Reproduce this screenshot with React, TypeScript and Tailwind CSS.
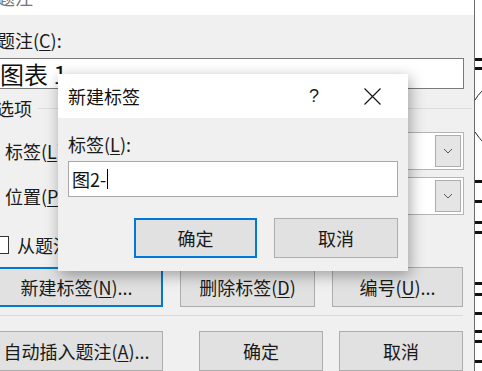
import React from 'react';

const font = { fontFamily: '"Noto Sans CJK SC", "Microsoft YaHei", sans-serif' };

const Btn = ({ children, w, primary, className = '' }: { children: React.ReactNode; w: string; primary?: boolean; className?: string }) => (
    <div
        className={`${w} h-[40px] shrink-0 flex items-center justify-center bg-[#e1e1e1] text-[18px] text-[#1a1a1a] ${primary ? 'border-2 border-[#0078d7]' : 'border border-[#adadad]'} ${className}`}
    >
        {children}
    </div>
);

const Combo = () => (
    <div className="ml-auto w-[384px] h-[38px] bg-white border border-[#b4b4b4] flex justify-end items-stretch p-[2px]">
        <div className="w-[26px] bg-[#e5e5e5] border border-[#adadad] flex items-center justify-center">
            <svg width="10" height="6" viewBox="0 0 10 6">
                <path d="M1 1 L5 5 L9 1" fill="none" stroke="#555" strokeWidth="1" />
            </svg>
        </div>
    </div>
);

// document strip on the far right
const DocStrip = () => {
    const bars = [58, 67, 180, 200, 221, 231, 282, 293, 312, 330, 340, 360];
    return (
        <div className="relative flex-1 bg-white border-l border-[#6b6b6b]">
            {bars.map(y => (
                <div key={y} className="absolute left-0 right-0 h-[3px] bg-[#111]" style={{ top: y }} />
            ))}
            <svg className="absolute left-0 top-0" width="8" height="371">
                <path d="M8 90 Q2 96 0 100" fill="none" stroke="#222" strokeWidth="1" />
                <path d="M0 132 Q4 138 8 142" fill="none" stroke="#222" strokeWidth="1" />
            </svg>
        </div>
    );
};

export default function App() {
    return (
        <div className="relative w-[482px] h-[371px] overflow-hidden flex" style={font}>
            {/* background caption dialog */}
            <div className="w-[474px] shrink-0 bg-[#f0f0f0] flex flex-col">
                <div className="h-[17px] bg-white overflow-hidden">
                    <div className="text-[18px] leading-[18px] text-[#777] -mt-[12px] -ml-[3px]">题注</div>
                </div>
                <div className="mt-[13px] h-[24px] leading-[24px] text-[18px] text-[#1a1a1a] -ml-[3px]">
                    题注(<u className="underline-offset-2">C</u>):
                </div>
                <div className="mt-[6px] ml-[-2px] w-[466px] h-[35px] bg-white border border-[#7a7a7a] flex items-center">
                    <span className="text-[24px] leading-[24px] text-[#111] pl-[1px] tracking-[0px]">图表 1</span>
                </div>
                <div className="mt-[7px] h-[24px] flex items-center">
                    <span className="text-[18px] text-[#1a1a1a] -ml-[4px]">选项</span>
                    <div className="ml-[6px] w-[434px] h-px bg-[#dcdcdc]" />
                </div>
                <div className="mt-[12px] flex items-center pr-[10px]">
                    <span className="ml-[5px] text-[18px] text-[#1a1a1a]">标签(<u className="underline-offset-2">L</u>)</span>
                    <Combo />
                </div>
                <div className="mt-[7px] flex items-center pr-[10px]">
                    <span className="ml-[5px] text-[18px] text-[#1a1a1a]">位置(<u className="underline-offset-2">P</u>)</span>
                    <Combo />
                </div>
                <div className="mt-[21px] h-[18px] flex items-center">
                    <div className="ml-[-8px] w-[17px] h-[18px] bg-white border border-[#333]" />
                    <span className="ml-[8px] text-[18px] text-[#1a1a1a]">从题注中排除标签(E)</span>
                </div>
                <div className="mt-[13px] flex gap-[17px] ml-[-10px]">
                    <Btn w="w-[173px]" primary>新建标签(<u className="underline-offset-2">N</u>)...</Btn>
                    <Btn w="w-[135px]">删除标签(<u className="underline-offset-2">D</u>)</Btn>
                    <Btn w="w-[131px]">编号(<u className="underline-offset-2">U</u>)...</Btn>
                </div>
                <div className="mt-[8px] w-[463px] h-px bg-[#d9d9d9]" />
                <div className="mt-[15px] flex ml-[-10px]">
                    <Btn w="w-[173px]">自动插入题注(<u className="underline-offset-2">A</u>)...</Btn>
                    <Btn w="w-[124px]" className="ml-[36px]">确定</Btn>
                    <Btn w="w-[124px]" className="ml-[16px]">取消</Btn>
                </div>
            </div>
            <DocStrip />

            {/* new label dialog */}
            <div className="absolute left-[58px] top-[74px] w-[350px] h-[197px] bg-[#f0f0f0] shadow-[2px_4px_14px_rgba(0,0,0,0.35)] flex flex-col">
                <div className="h-[44px] bg-white flex items-center shrink-0">
                    <span className="ml-[10px] text-[18px] text-[#111]">新建标签</span>
                    <span className="ml-auto mr-[45px] text-[18px] text-[#222] font-['Liberation_Sans']">?</span>
                    <svg className="mr-[27px]" width="17" height="17" viewBox="0 0 17 17">
                        <path d="M0.5 0.5 L16.5 16.5 M16.5 0.5 L0.5 16.5" stroke="#111" strokeWidth="1.1" />
                    </svg>
                </div>
                <div className="mt-[14px] ml-[10px] h-[24px] leading-[24px] text-[18px] text-[#1a1a1a]">
                    标签(<u className="underline-offset-2">L</u>):
                </div>
                <div className="mt-[5px] ml-[10px] w-[330px] h-[36px] bg-white border border-[#a8a8a8] flex items-center">
                    <span className="ml-[3px] text-[18px] text-[#111]">图2-</span>
                    <span className="w-px h-[20px] bg-black ml-[1px]" />
                </div>
                <div className="mt-[21px] flex justify-end gap-[17px] pr-[10px]">
                    <Btn w="w-[123px]" primary>确定</Btn>
                    <Btn w="w-[124px]">取消</Btn>
                </div>
            </div>
        </div>
    );
}
